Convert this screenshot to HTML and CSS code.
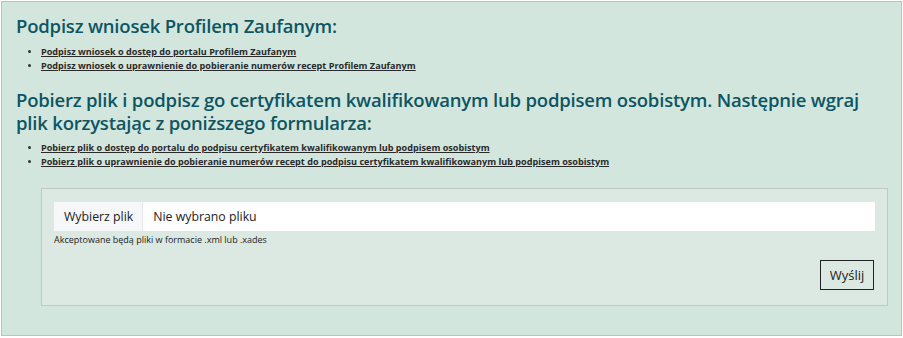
FILE: index.html
```html
<!DOCTYPE html>
<html lang="pl">
<head>
<meta charset="utf-8">
<link rel="stylesheet" href="styles.css">
</head>
<body>
<div class="panel">
  <h2 class="title">Podpisz wniosek Profilem Zaufanym:</h2>
  <ul class="links">
    <li><a href="#">Podpisz wniosek o dostęp do portalu Profilem Zaufanym</a></li>
    <li><a href="#">Podpisz wniosek o uprawnienie do pobieranie numerów recept Profilem Zaufanym</a></li>
  </ul>
  <h2 class="title title-2">Pobierz plik i podpisz go certyfikatem kwalifikowanym lub podpisem osobistym. Następnie wgraj plik korzystając z poniższego formularza:</h2>
  <ul class="links">
    <li><a href="#">Pobierz plik o dostęp do portalu do podpisu certyfikatem kwalifikowanym lub podpisem osobistym</a></li>
    <li><a href="#">Pobierz plik o uprawnienie do pobieranie numerów recept do podpisu certyfikatem kwalifikowanym lub podpisem osobistym</a></li>
  </ul>
  <form class="upload">
    <div class="file">
      <span class="file-btn">Wybierz plik</span>
      <span class="file-name">Nie wybrano pliku</span>
    </div>
    <div class="hint">Akceptowane będą pliki w formacie .xml lub .xades</div>
    <div class="actions">
      <button type="button" class="send">Wyślij</button>
    </div>
  </form>
</div>
</body>
</html>
```

FILE: styles.css
```css
html, body {
  margin: 0;
  padding: 0;
  background: #ffffff;
}
body {
  padding: 1px;
  font-family: "Open Sans", "Noto Sans", sans-serif;
  color: #222;
}
.panel {
  box-sizing: border-box;
  width: 901px;
  height: 335px;
  background: #d2e6dd;
  border: 1px solid #a9ccbb;
  padding: 12px 13px 0 14px;
}
.title {
  margin: 0;
  font-size: 18.5px;
  font-weight: 600;
  line-height: 24px;
  color: #0d5562;
  letter-spacing: -0.2px;
}
.title-2 {
  margin-top: 15px;
  line-height: 23px;
}
.links {
  margin: 7px 0 0 0;
  padding: 0 0 0 25px;
  font-size: 9.1px;
  line-height: 14px;
  font-weight: 700;
  list-style: disc;
}
.links li::marker {
  font-size: 8px;
  color: #333;
}
.links a {
  color: #2a2a2a;
  text-decoration: underline;
}
.upload {
  margin: 19px 0 0 25px;
  background: #dbe9e2;
  border: 1px solid #c2c9c5;
  padding: 13px 12px 15px 12px;
}
.file {
  display: flex;
  height: 29px;
  background: #fff;
  font-size: 12.3px;
}
.file-btn {
  display: flex;
  align-items: center;
  padding: 0 9px 0 10px;
  background: #f5f7f8;
  border-right: 1px solid #e4e6e8;
  color: #222;
}
.file-name {
  display: flex;
  align-items: center;
  padding: 0 10px;
  color: #222;
}
.hint {
  margin-top: 3px;
  font-size: 9px;
  line-height: 12px;
  color: #222;
}
.actions {
  display: flex;
  justify-content: flex-end;
  margin-top: 14px;
}
.send {
  box-sizing: border-box;
  width: 54px;
  height: 30px;
  background: transparent;
  border: 1px solid #222;
  border-radius: 0;
  font-family: inherit;
  font-size: 13px;
  color: #222;
  margin-right: 1px;
  padding: 0;
}
```
